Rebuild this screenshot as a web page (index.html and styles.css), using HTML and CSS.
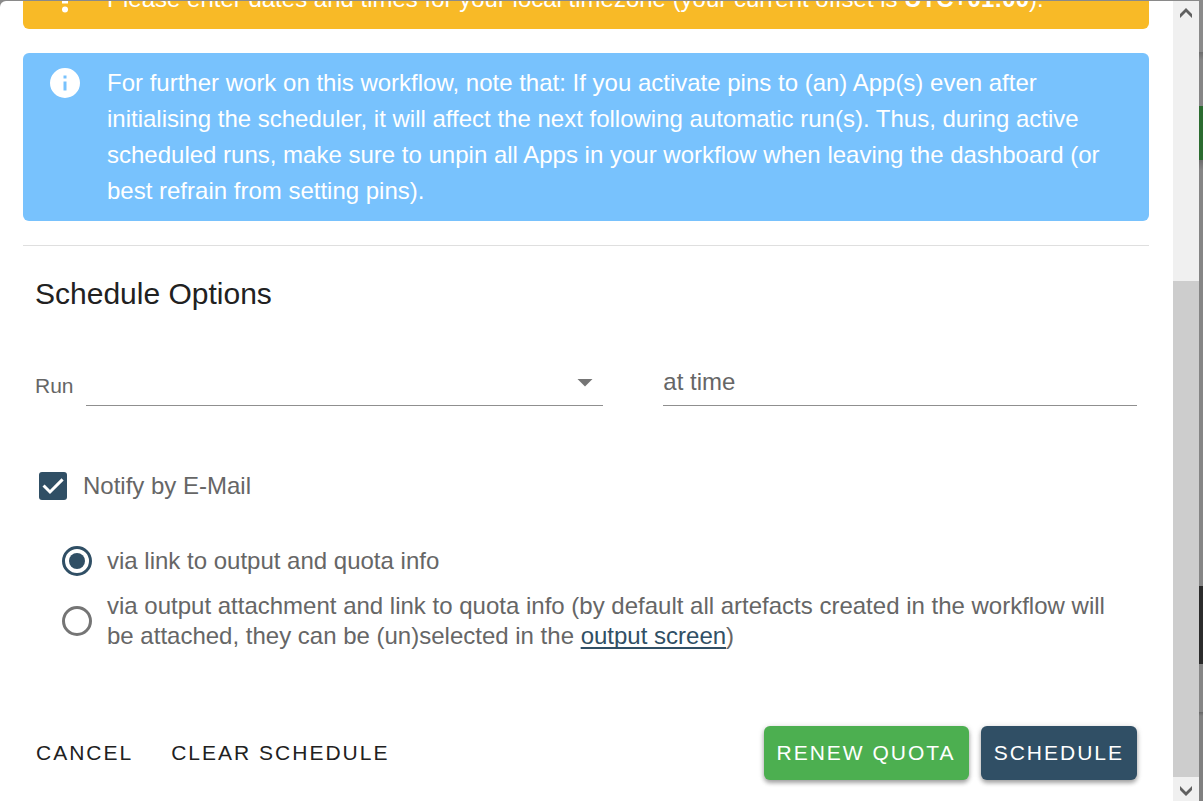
FILE: index.html
```html
<!DOCTYPE html>
<html lang="en">
<head>
<meta charset="utf-8">
<meta name="viewport" content="width=device-width, initial-scale=1">
<title>Schedule Options</title>
<link rel="stylesheet" href="styles.css">
</head>
<body>
<div class="backdrop">
  <div class="dialog">
    <main class="content">
      <div class="alert alert-warning">
        <svg class="alert-icon" viewBox="0 0 24 24" aria-hidden="true"><circle cx="12" cy="19" r="2"/><path d="M10 3h4v12h-4z"/></svg>
        <p class="alert-text">Please enter dates and times for your local timezone (your current offset is <strong>UTC+01:00</strong>).</p>
      </div>
      <div class="alert alert-info">
        <svg class="alert-icon" viewBox="0 0 24 24" aria-hidden="true"><path d="M13 9h-2V7h2m0 10h-2v-6h2m-1-9A10 10 0 0 0 2 12a10 10 0 0 0 10 10 10 10 0 0 0 10-10A10 10 0 0 0 12 2z"/></svg>
        <p class="alert-text">For further work on this workflow, note that: If you activate pins to (an) App(s) even after initialising the scheduler, it will affect the next following automatic run(s). Thus, during active scheduled runs, make sure to unpin all Apps in your workflow when leaving the dashboard (or best refrain from setting pins).</p>
      </div>
      <hr class="divider">
      <form class="options">
        <h2 class="title">Schedule Options</h2>
        <div class="fields">
          <div class="run-field">
            <label class="run-label" for="run">Run</label>
            <div class="select-wrap">
              <select class="control run-select" id="run"><option value=""></option></select>
              <svg class="arrow" viewBox="0 0 24 24" aria-hidden="true"><path d="M7 10l5 5 5-5z"/></svg>
            </div>
          </div>
          <input class="control" type="text" placeholder="at time" aria-label="at time">
        </div>
        <label class="choice notify">
          <span class="box">
            <input class="check" type="checkbox" checked>
            <svg class="tick" viewBox="0 0 24 24" aria-hidden="true"><path d="M5.700 11.700l4.300 4.300 8.400-8.400"/></svg>
          </span>
          <span>Notify by E-Mail</span>
        </label>
        <div class="methods">
          <label class="choice">
            <span class="box"><input class="radio" type="radio" name="method" checked></span>
            <span>via link to output and quota info</span>
          </label>
          <div class="choice">
            <span class="box"><input class="radio" type="radio" name="method" id="attachment"></span>
            <label for="attachment">via output attachment and link to quota info (by default all artefacts created in the workflow will be attached, they can be (un)selected in the <a class="link" href="#">output screen</a>)</label>
          </div>
        </div>
        <div class="actions">
          <button class="btn" type="button">CANCEL</button>
          <button class="btn" type="button">CLEAR SCHEDULE</button>
          <button class="btn btn-raised btn-renew" type="button">RENEW QUOTA</button>
          <button class="btn btn-raised btn-schedule" type="button">SCHEDULE</button>
        </div>
      </form>
    </main>
    <div class="scrollbar" aria-hidden="true">
      <svg class="scroll-arrow" viewBox="0 0 26 24"><path d="M7 13l6-6 6 6v4l-6-6-6 6z"/></svg>
      <div class="track"><div class="thumb"></div></div>
      <svg class="scroll-arrow" viewBox="0 0 26 24"><path d="M7 9l6 6 6-6v4l-6 6-6-6z"/></svg>
    </div>
  </div>
</div>
</body>
</html>
```
FILE: styles.css
```css
* {
  box-sizing: border-box;
}

body {
  margin: 0;
  font-family: "Liberation Sans", Arial, sans-serif;
  font-size: 24px;
  line-height: 30px;
  color: #666;
}

.backdrop {
  height: 100vh;
  padding: 1px 4px 0 0;
  overflow: hidden;
  background: linear-gradient(#8a8a8a 52px, #6e6e6e 52px, #858585 60px, #858585 106px, #2b6b30 106px, #2b6b30 160px, #6e6e6e 160px, #858585 170px, #858585 586px, #2b2b2b 586px, #2b2b2b 664px, #858585 664px, #858585 712px, #666 712px, #808080 716px);
}

.dialog {
  display: flex;
  height: 100%;
  overflow: hidden;
  border-radius: 6px 0 0 0;
  background: #fff;
}

/* Shifted up to the scrolled position of the dialog */
.content {
  flex: 1;
  min-width: 0;
  margin-top: -32px;
  padding: 0 24px 24px 23px;
}

.alert {
  display: flex;
  gap: 24px;
  margin-bottom: 24px;
  padding: 12px 24px;
  border-radius: 6px;
  color: #fff;
}

.alert-warning {
  background: #f8ba27;
}

.alert-info {
  background: #78c2fd;
}

.alert-icon {
  flex: none;
  width: 36px;
  height: 36px;
  fill: #fff;
}

.alert-text {
  flex: 1;
  margin: 0;
  line-height: 36px;
}

.divider {
  height: 1px;
  margin: 0;
  border: 0;
  background: #dfdfdf;
}

.options {
  padding: 24px 12px;
}

.title {
  margin: 0;
  font-size: 30px;
  font-weight: 400;
  line-height: 48px;
  color: #212121;
}

.fields {
  display: grid;
  grid-template-columns: 6fr 5fr;
  gap: 60px;
  margin-top: 40px;
}

.run-field {
  display: flex;
  align-items: center;
  gap: 12px;
}

.run-label {
  padding-top: 8px;
  font-size: 21px;
}

.select-wrap {
  display: grid;
  flex: 1;
  align-items: center;
}

.control {
  width: 100%;
  height: 48px;
  padding: 0;
  border: 0;
  border-bottom: 1px solid #8f8f8f;
  border-radius: 0;
  appearance: none;
  background: none;
  font: inherit;
  color: #212121;
}

.control::placeholder {
  color: #666;
  opacity: 1;
}

.run-select,
.arrow {
  grid-area: 1 / 1;
}

.arrow {
  justify-self: end;
  width: 36px;
  height: 36px;
  fill: #757575;
  pointer-events: none;
}

.choice {
  display: flex;
  align-items: center;
  gap: 12px;
  min-height: 36px;
}

.notify {
  margin-top: 62px;
}

.methods {
  display: flex;
  flex-direction: column;
  gap: 12px;
  margin: 39px 0 0 24px;
}

.box {
  display: grid;
  flex: none;
  place-items: center;
  width: 36px;
  height: 36px;
}

.check {
  grid-area: 1 / 1;
  width: 28px;
  height: 28px;
  margin: 0;
  border-radius: 3px;
  appearance: none;
  background: #304f65;
}

.tick {
  grid-area: 1 / 1;
  width: 36px;
  height: 36px;
  fill: none;
  stroke: #fff;
  stroke-width: 2;
  pointer-events: none;
}

.radio {
  display: grid;
  place-items: center;
  width: 30px;
  height: 30px;
  margin: 0;
  border: 3px solid #757575;
  border-radius: 50%;
  appearance: none;
}

.radio:checked {
  border-color: #304f65;
}

.radio:checked::before {
  content: "";
  width: 16px;
  height: 16px;
  border-radius: 50%;
  background: #304f65;
}

.link {
  color: #304f65;
  text-decoration: underline 2px;
  text-decoration-skip-ink: none;
  text-underline-offset: 3px;
}

.actions {
  display: flex;
  gap: 12px;
  margin: 75px 0 0 -12px;
}

.btn {
  height: 54px;
  padding: 0 13px;
  border: 0;
  border-radius: 6px;
  background: none;
  font: inherit;
  font-size: 21px;
  letter-spacing: 2px;
  color: #212121;
}

.btn-raised {
  color: #fff;
  box-shadow: 0 3px 4px rgba(0, 0, 0, 0.3), 0 1px 6px rgba(0, 0, 0, 0.15);
}

.btn-renew {
  margin-left: auto;
  background: #4caf50;
}

.btn-schedule {
  background: #304f65;
}

.scrollbar {
  display: flex;
  flex-direction: column;
  width: 26px;
  background: #f0f0f0;
}

.scroll-arrow {
  flex: none;
  width: 26px;
  height: 24px;
  fill: #606060;
}

.track {
  display: flex;
  flex: 1;
  flex-direction: column;
  justify-content: flex-end;
}

.thumb {
  height: 66%;
  background: #cdcdcd;
}
```
